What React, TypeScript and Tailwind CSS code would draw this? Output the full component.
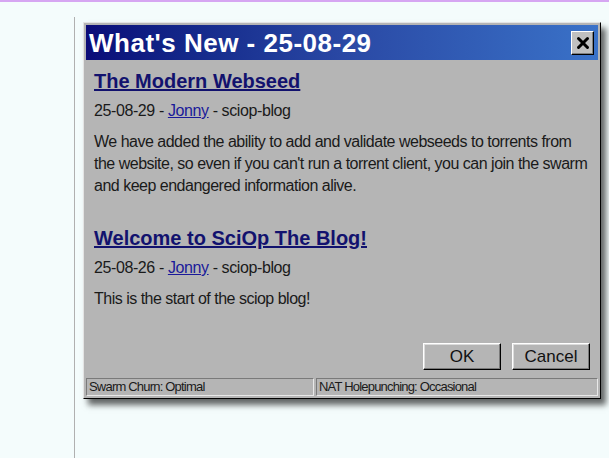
import { X } from "lucide-react";

const posts = [
  {
    title: "The Modern Webseed",
    date: "25-08-29",
    lines: [
      "We have added the ability to add and validate webseeds to torrents from",
      "the website, so even if you can't run a torrent client, you can join the swarm",
      "and keep endangered information alive.",
    ],
  },
  {
    title: "Welcome to SciOp The Blog!",
    date: "25-08-26",
    lines: ["This is the start of the sciop blog!"],
  },
];

function Win95Button({ children }: { children: React.ReactNode }) {
  return (
    <button className="w-[78px] h-[27px] bg-[#b5b5b5] text-[17px] text-[#111] border border-t-white border-l-white border-r-black border-b-black shadow-[inset_-1px_-1px_0_#7a7a7a,inset_1px_1px_0_#dcdcdc]">
      {children}
    </button>
  );
}

export default function App() {
  return (
    <div
      className="min-h-[458px] bg-[#f4fcfc] border-t-2 border-[#d6a6f2] pt-[15px]"
      style={{ fontFamily: '"Liberation Sans", Arial, sans-serif' }}
    >
      <div className="ml-[74px] border-l border-[#b0b0b0] min-h-[441px] pl-[8px] pt-[5px]">
        <div className="w-[518px] bg-[#b5b5b5] border border-t-[#e4e4e4] border-l-[#e4e4e4] border-r-black border-b-black p-[2px] shadow-[5px_6px_6px_rgba(0,0,0,0.6)]">
          <div className="h-[35px] flex items-center justify-between pl-[3px] pr-[4px] bg-gradient-to-r from-[#0b0b78] via-[#2a48a4] to-[#3a72c8]">
            <span className="text-white font-bold text-[26px] tracking-[0.5px] leading-none">
              What's New - 25-08-29
            </span>
            <button className="w-[23px] h-[24px] bg-[#c0c0c0] border border-t-white border-l-white border-r-black border-b-black flex items-center justify-center shadow-[inset_-1px_-1px_0_#808080]">
              <X size={18} strokeWidth={4} color="#000" />
            </button>
          </div>
          <div className="pl-[8px] pr-[4px] pt-[8px] text-[#1a1a1a]">
            {posts.map((p, i) => (
              <div key={i} className={i > 0 ? "mt-[28px]" : ""}>
                <h2 className="text-[#12126e] font-bold text-[20px] underline leading-[26px]">
                  {p.title}
                </h2>
                <div className="text-[16px] leading-[22px] mt-[6px] tracking-[-0.4px]">
                  {p.date} - <span className="text-[#1a1a9a] underline">Jonny</span> - sciop-blog
                </div>
                <p className="text-[16px] leading-[22px] mt-[9px] tracking-[-0.5px] whitespace-nowrap">
                  {p.lines.map((l, j) => (
                    <span key={j} className="block">
                      {l}
                    </span>
                  ))}
                </p>
              </div>
            ))}
            <div className="flex justify-end gap-[11px] mt-[33px] pr-[4px]">
              <Win95Button>OK</Win95Button>
              <Win95Button>Cancel</Win95Button>
            </div>
          </div>
          <div className="flex gap-[2px] mt-[8px] text-[13px] text-[#1a1a1a] tracking-[-0.8px]">
            <div className="w-[228px] h-[18px] px-[2px] leading-[16px] border border-t-[#7a7a7a] border-l-[#7a7a7a] border-r-[#e8e8e8] border-b-[#e8e8e8]">
              Swarm Churn: Optimal
            </div>
            <div className="flex-1 h-[18px] px-[2px] leading-[16px] border border-t-[#7a7a7a] border-l-[#7a7a7a] border-r-[#e8e8e8] border-b-[#e8e8e8]">
              NAT Holepunching: Occasional
            </div>
          </div>
        </div>
      </div>
    </div>
  );
}
